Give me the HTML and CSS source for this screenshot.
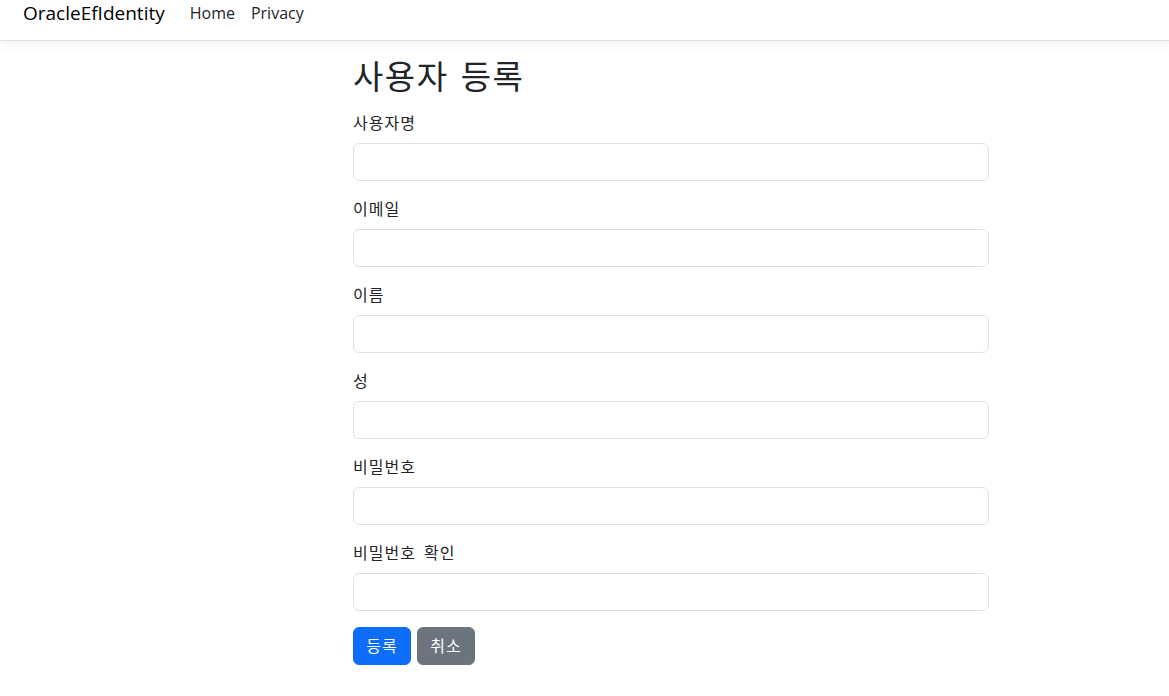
FILE: index.html
```html
<!DOCTYPE html>
<html lang="ko">
<head>
<meta charset="utf-8">
<title>사용자 등록</title>
<link rel="stylesheet" href="styles.css">
</head>
<body>
<header class="navbar">
  <a class="brand" href="#">OracleEfIdentity</a>
  <nav class="nav-links">
    <a class="nav-link" href="#">Home</a>
    <a class="nav-link" href="#">Privacy</a>
  </nav>
</header>
<main class="main">
  <div class="form-wrap">
    <h2 class="title">사용자 등록</h2>
    <form class="form">
      <div class="field">
        <label class="form-label">사용자명</label>
        <input class="form-control" type="text">
      </div>
      <div class="field">
        <label class="form-label">이메일</label>
        <input class="form-control" type="email">
      </div>
      <div class="field">
        <label class="form-label">이름</label>
        <input class="form-control" type="text">
      </div>
      <div class="field">
        <label class="form-label">성</label>
        <input class="form-control" type="text">
      </div>
      <div class="field">
        <label class="form-label">비밀번호</label>
        <input class="form-control" type="password">
      </div>
      <div class="field">
        <label class="form-label">비밀번호 확인</label>
        <input class="form-control" type="password">
      </div>
      <div class="actions">
        <button type="submit" class="btn btn-primary">등록</button>
        <button type="button" class="btn btn-secondary">취소</button>
      </div>
    </form>
  </div>
</main>
</body>
</html>
```
FILE: styles.css
```css
* { box-sizing: border-box; }
html, body {
  margin: 0;
  padding: 0;
  background: #fff;
  color: #212529;
  font-family: "Open Sans", "Noto Sans CJK KR", sans-serif;
  font-size: 16px;
  line-height: 1.5;
}
.navbar {
  height: 41px;
  display: flex;
  align-items: flex-start;
  padding: 0 23px;
  border-bottom: 1px solid #dee2e6;
  box-shadow: 0 4px 12px rgba(0, 0, 0, 0.05);
  background: #fff;
}
.brand {
  font-size: 19px;
  line-height: 27px;
  color: #000;
  text-decoration: none;
  margin-right: 25px;
}
.nav-links {
  display: flex;
  gap: 16px;
}
.nav-link {
  font-size: 16px;
  line-height: 26px;
  color: #212529;
  text-decoration: none;
}
.main {
  padding-top: 16px;
}
.form-wrap {
  margin-left: 353px;
  width: 636px;
}
.title {
  margin: 0 0 14px;
  font-size: 33px;
  font-weight: 400;
  line-height: 1.2;
  letter-spacing: 1.5px;
  word-spacing: 2px;
}
.field {
  margin-bottom: 16px;
}
.form-label {
  display: block;
  margin-bottom: 8px;
  line-height: 24px;
  letter-spacing: 1px;
  word-spacing: 3px;
}
.form-control {
  display: block;
  width: 100%;
  height: 38px;
  padding: 6px 12px;
  font: inherit;
  border: 1px solid #dee2e6;
  border-radius: 6px;
  background: #fff;
}
.actions {
  display: flex;
  gap: 6px;
}
.btn {
  width: 58px;
  height: 38px;
  padding: 6px 0;
  font: inherit;
  line-height: 24px;
  letter-spacing: 1px;
  color: #fff;
  border: 1px solid transparent;
  border-radius: 6px;
  cursor: pointer;
  text-align: center;
}
.btn-primary { background: #0d6efd; border-color: #0d6efd; }
.btn-secondary { background: #6c757d; border-color: #6c757d; }
```
